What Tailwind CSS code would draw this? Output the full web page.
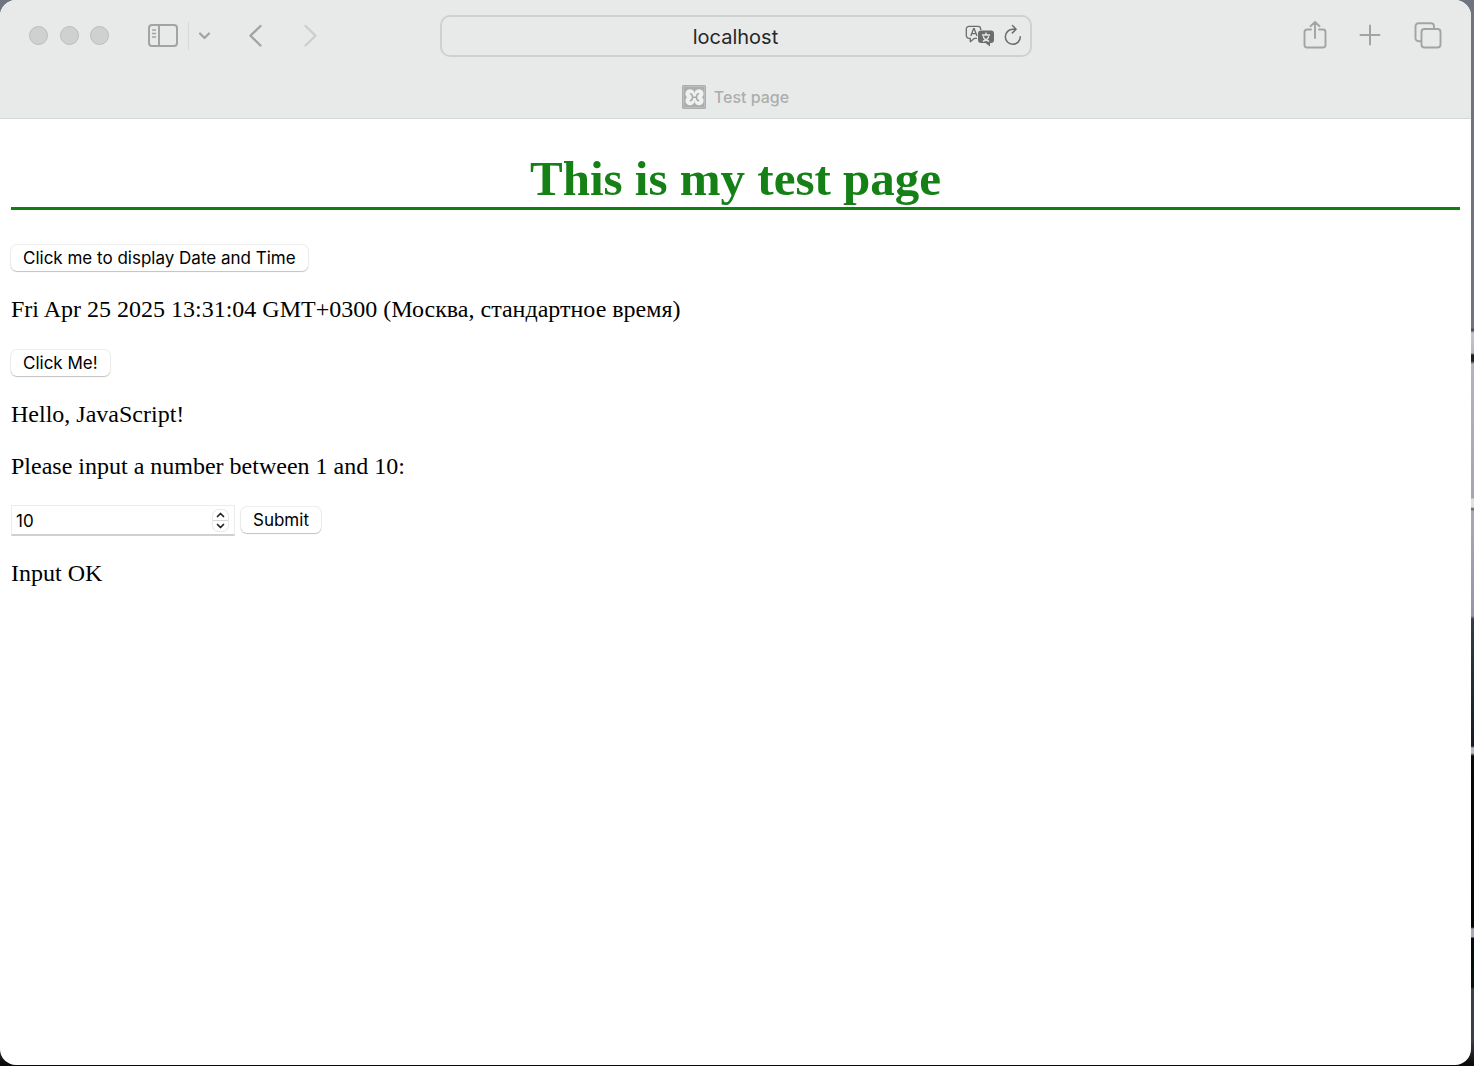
<!DOCTYPE html>
<html lang="en">
<head>
<meta charset="utf-8">
<meta name="viewport" content="width=device-width, initial-scale=1">
<title>Test page</title>
<script src="https://cdn.jsdelivr.net/npm/@tailwindcss/browser@4"></script>
</head>
<body class="h-screen overflow-hidden bg-[#050708] bg-[linear-gradient(to_bottom,#70747f_0px,#70747f_328px,#3c3c44_330px,#c4c4cb_333px,#b8b8c0_353px,#1c2022_355px,#1c2022_361px,#b4b4bc_364px,#a5a5ae_498px,#e0dfe2_499px,#e0dfe2_507px,#55555c_509px,#a8a8b3_511px,#9893ab_616px,#353e49_619px,#151b20_746px,#b9bac4_748px,#b9bac4_753px,#05090a_756px,#020607_927px,#aaa8b4_929px,#aaa8b4_937px,#050b0c_938px,#081010_987px,#3b3f48_989px,#3b3f48_1040px,#0a0a0a_1064px)] pr-[3px] pb-px font-[Inter,sans-serif]">
<div class="flex h-full flex-col overflow-hidden rounded-[16px] bg-white">
  <header class="border-b border-[#d6d7d7] bg-[#e8eae9] text-[#a2a4a3]">
    <div class="grid h-[71px] grid-cols-[1fr_592px_1fr] items-center">
      <div class="flex items-center pl-[29px]">
        <div class="flex w-20 justify-between">
          <button aria-label="Close" class="size-[19px] rounded-full border border-[#bbbdbc] bg-[#cfd1d0]"></button>
          <button aria-label="Minimize" class="size-[19px] rounded-full border border-[#bbbdbc] bg-[#cfd1d0]"></button>
          <button aria-label="Zoom" class="size-[19px] rounded-full border border-[#bbbdbc] bg-[#cfd1d0]"></button>
        </div>
        <button aria-label="Sidebar" class="ml-[39px]">
          <svg class="block" width="30" height="26" viewBox="0 0 30 26" fill="none" stroke="currentColor" stroke-width="2"><rect x="1" y="2" width="28" height="21" rx="3"/><path d="M11 2v21"/><path d="M4 7h4M4 10.5h4M4 14h4" stroke-width="1.3"/></svg>
        </button>
        <span class="ml-[10px] h-7 w-px bg-[#d6d8d7]"></span>
        <button aria-label="Tab groups" class="ml-[9px]">
          <svg class="block" width="13" height="10" viewBox="0 0 13 10" fill="none" stroke="currentColor" stroke-width="2.2" stroke-linecap="round" stroke-linejoin="round"><path d="M2 2.500l4.500 4.600L11 2.500"/></svg>
        </button>
        <button aria-label="Back" class="ml-[37px]">
          <svg class="block" width="15" height="26" viewBox="0 0 15 26" fill="none" stroke="currentColor" stroke-width="2.300" stroke-linecap="round" stroke-linejoin="round"><path d="M12.500 3L2.500 12.700l10 9.800"/></svg>
        </button>
        <button aria-label="Forward" class="ml-10 text-[#cccecd]" disabled>
          <svg class="block" width="15" height="26" viewBox="0 0 15 26" fill="none" stroke="currentColor" stroke-width="2.300" stroke-linecap="round" stroke-linejoin="round"><path d="M2.500 3l10 9.700-10 9.800"/></svg>
        </button>
      </div>
      <div class="relative">
        <input aria-label="Address" value="localhost" class="block h-[42px] w-full rounded-[10px] border-2 border-[#cfd1d0] bg-transparent pt-[3px] text-center text-xl text-[#262727]">
        <div class="absolute inset-y-0 right-[10px] flex items-center gap-[9px] text-[#6b6d6c]">
          <button aria-label="Translate">
            <svg class="block" width="30" height="24" viewBox="0 0 30 24" fill="none"><path d="M12 14.300H9.500L5.300 17.700V14.300H4A2.700 2.700 0 0 1 1.300 11.600V5A2.700 2.700 0 0 1 4 2.300H13A2.700 2.700 0 0 1 15.700 5V6" stroke="currentColor" stroke-width="1.300" stroke-linejoin="round"/><path d="M5.800 12l2.800-7.300h.6L12 12M6.800 9.600H11" stroke="currentColor" stroke-width="1.300"/><path d="M16 6.500h10a3 3 0 0 1 3 3v6.500a3 3 0 0 1-3 3h-1v3.500L20.500 19H16a3 3 0 0 1-3-3V9.500a3 3 0 0 1 3-3z" fill="currentColor"/><path d="M21 8.500v2.300M17 11h8M18.200 12.200c1 3 3.500 4.500 6 5M23.800 12.200c-1 3-3.500 4.500-6 5" stroke="#e8eae9" stroke-width="1.400"/></svg>
          </button>
          <button aria-label="Reload">
            <svg class="block" width="18" height="24" viewBox="0 0 18 24" fill="none" stroke="currentColor" stroke-width="1.500" stroke-linecap="round" stroke-linejoin="round"><path d="M16.300 12.800A7.500 7.500 0 1 1 9 5.300h2.800M8.500 1.500l3.600 3.700-3.700 3.700"/></svg>
          </button>
        </div>
      </div>
      <div class="flex items-center justify-end pr-[29px]">
        <button aria-label="Share">
          <svg class="block" width="24" height="30" viewBox="0 0 24 30" fill="none" stroke="currentColor" stroke-width="1.900" stroke-linecap="round" stroke-linejoin="round"><path d="M8 8.500H4A2.500 2.500 0 0 0 1.500 11V24A2.500 2.500 0 0 0 4 26.500H20a2.500 2.500 0 0 0 2.500-2.500V11A2.500 2.500 0 0 0 20 8.500H16M12 17V1M7.500 5.200L12 1l4.500 4.200"/></svg>
        </button>
        <button aria-label="New tab" class="ml-8">
          <svg class="block" width="22" height="24" viewBox="0 0 22 24" fill="none" stroke="currentColor" stroke-width="2" stroke-linecap="round"><path d="M11 1.500v19M1.500 11h19"/></svg>
        </button>
        <button aria-label="Tab overview" class="ml-[33px]">
          <svg class="block" width="28" height="28" viewBox="0 0 28 28" fill="none" stroke="currentColor" stroke-width="1.900"><path d="M7.500 19.300H4.500a3 3 0 0 1-3-3V4.500A3 3 0 0 1 4.500 1.300H17a3 3 0 0 1 3 3V7"/><rect x="7.500" y="7" width="19" height="18.500" rx="3"/></svg>
        </button>
      </div>
    </div>
    <div class="flex h-[47px] items-center justify-center gap-2 pt-[5px]">
      <svg width="24" height="24" viewBox="0 0 24 24"><rect width="24" height="24" rx="1.500" fill="#acaead"/><path d="M1.500 22.500v-21h21v21z" fill="none" stroke="#bcbebd"/><g fill="#eff1f0"><circle cx="8" cy="8.800" r="4.600"/><circle cx="17" cy="8.800" r="4.600"/><circle cx="8" cy="15.700" r="4.600"/><circle cx="17" cy="15.700" r="4.600"/><path d="M8 9h9v6.500H8z"/></g><path d="M8.500 8.800q2 .4 2 3.400 0 3-2 3.400M16.500 8.800q-2 .4-2 3.400 0 3 2 3.400M10.500 12.200h4" fill="none" stroke="#a9abaa" stroke-width="1.600" stroke-linecap="round"/></svg>
      <span class="text-[16px] font-medium text-[#acaead]">Test page</span>
    </div>
  </header>
  <main class="flex-1 px-[11px] pt-8 font-['Liberation_Serif',serif] text-2xl leading-7 text-black">
    <h1 class="border-b-3 border-[#0f7f12] text-center text-[49px] leading-[56px] font-bold text-[#148016]">This is my test page</h1>
    <button class="mt-[35px] block h-[26px] rounded-md bg-white px-3 font-[Inter,sans-serif] text-[17px] leading-[26px] shadow-[0_0_1px_1px_#00000012,0_1px_1px_#00000030]">Click me to display Date and Time</button>
    <p class="mt-6">Fri Apr 25 2025 13:31:04 GMT+0300 (Москва, стандартное время)</p>
    <button class="mt-[27px] block h-[26px] rounded-md bg-white px-3 font-[Inter,sans-serif] text-[17px] leading-[26px] shadow-[0_0_1px_1px_#00000012,0_1px_1px_#00000030]">Click Me!</button>
    <p class="mt-6">Hello, JavaScript!</p>
    <p class="mt-6"><label for="num">Please input a number between 1 and 10:</label></p>
    <div class="mt-[25px] flex items-start gap-[6px]">
      <div class="relative">
        <input id="num" type="number" min="1" max="10" value="10" class="block h-[31px] w-[224px] appearance-none border border-b-2 border-[#ececec] border-b-[#d0d0d0] pt-[2px] pl-1 font-[Inter,sans-serif] text-[17px] [appearance:textfield]">
        <div class="absolute inset-y-[5px] right-[7px] flex w-[15px] flex-col divide-y divide-[#d8d8d8] rounded-md bg-white shadow-[0_0_1px_1px_#00000018]">
          <button aria-label="Increase" class="flex flex-1 items-center justify-center"><svg width="9" height="6" viewBox="0 0 9 6" fill="none" stroke="#222" stroke-width="1.700" stroke-linecap="round" stroke-linejoin="round"><path d="M1.500 4.500l3-3 3 3"/></svg></button>
          <button aria-label="Decrease" class="flex flex-1 items-center justify-center"><svg width="9" height="6" viewBox="0 0 9 6" fill="none" stroke="#222" stroke-width="1.700" stroke-linecap="round" stroke-linejoin="round"><path d="M1.500 1.500l3 3 3-3"/></svg></button>
        </div>
      </div>
      <button class="mt-[2px] h-[26px] rounded-md bg-white px-3 font-[Inter,sans-serif] text-[17px] leading-[26px] shadow-[0_0_1px_1px_#00000012,0_1px_1px_#00000030]">Submit</button>
    </div>
    <p class="mt-[23px]">Input OK</p>
  </main>
</div>
</body>
</html>
